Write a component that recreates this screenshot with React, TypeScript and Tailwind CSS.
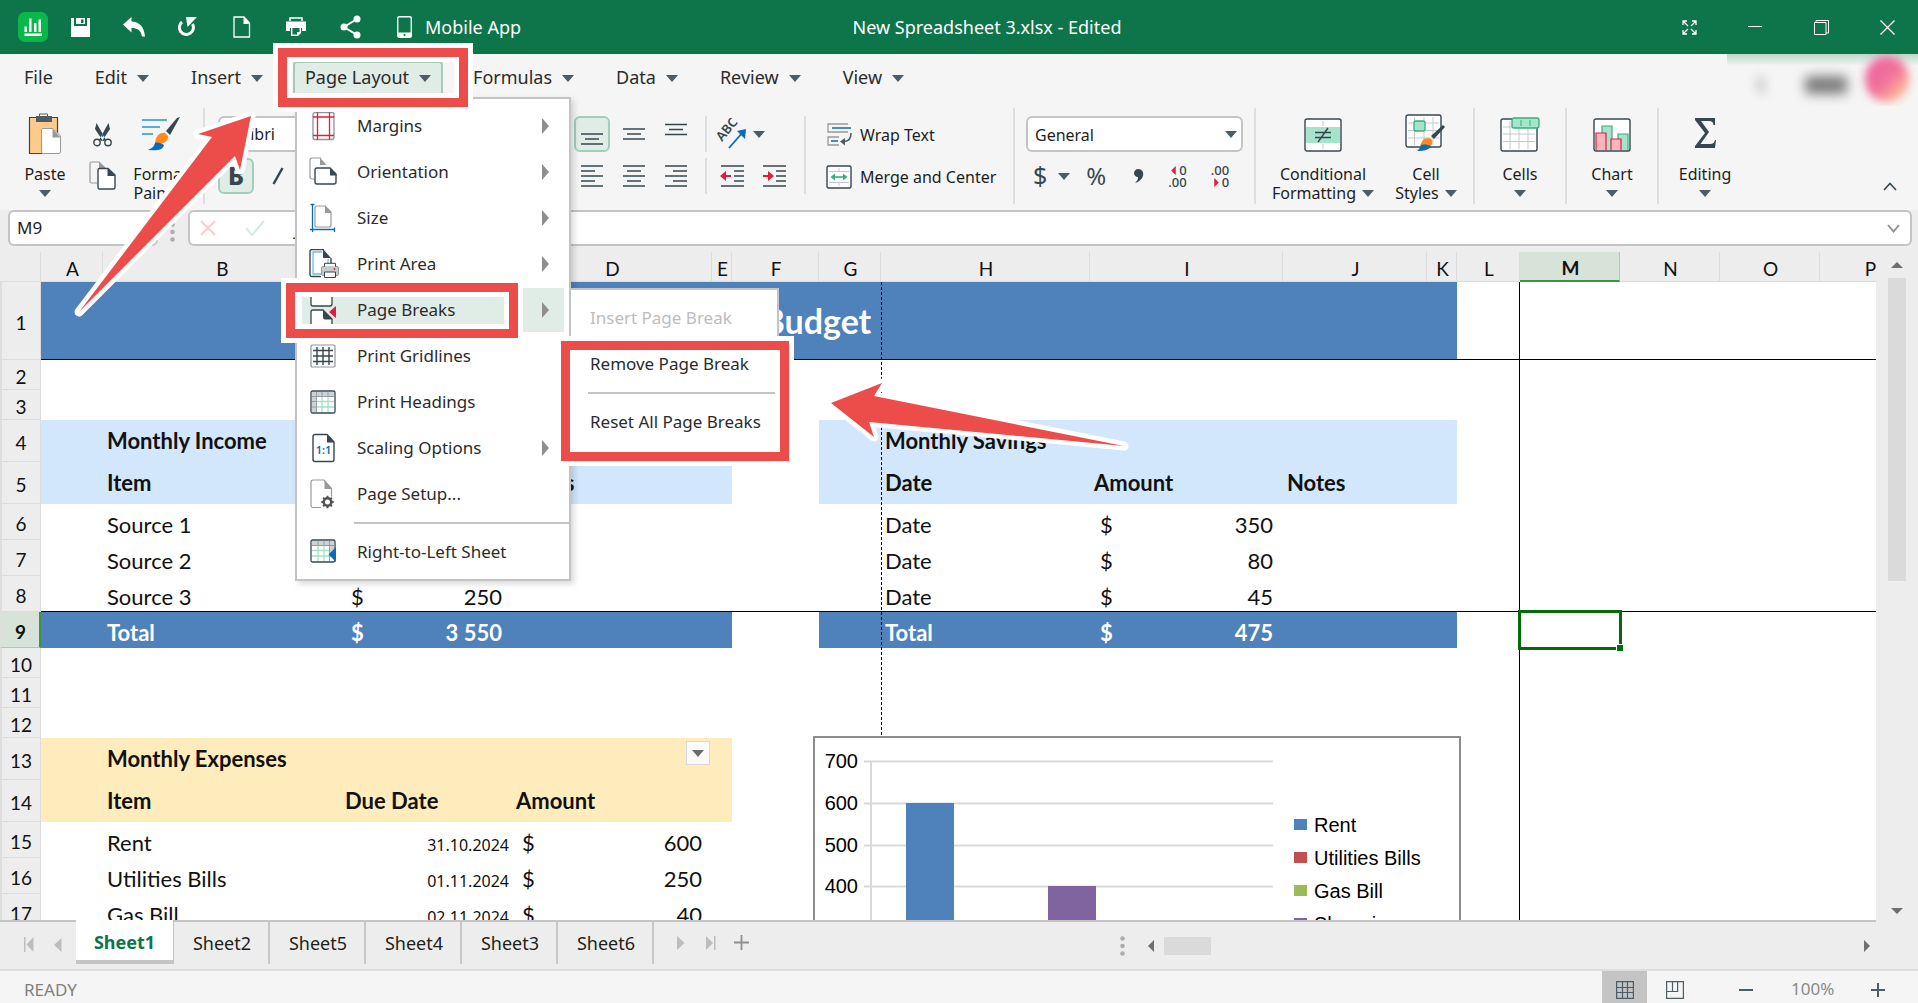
import React from "react";

const DARK = "#36474f";

type P = { children?: React.ReactNode };

function Down({ className = "text-[#4c5d68]" }: { className?: string }) {
  return (
    <svg width="12" height="7" viewBox="0 0 12 7" className={className} fill="currentColor" aria-hidden="true">
      <path d="M0 0h12L6 7z" />
    </svg>
  );
}

function Tri({ dir, className = "" }: { dir: "left" | "right" | "up" | "down"; className?: string }) {
  const d = {
    left: "M6 0v12L0 6z",
    right: "M0 0v12l6-6z",
    up: "M6 0l6 6H0z",
    down: "M0 0h12L6 6z",
  }[dir];
  const horizontal = dir === "left" || dir === "right";
  const w = horizontal ? 6 : 12;
  const h = horizontal ? 12 : 6;
  return (
    <svg width={w} height={h} viewBox={`0 0 ${w} ${h}`} className={className} fill="currentColor" aria-hidden="true">
      <path d={d} />
    </svg>
  );
}

/* ---------- title bar ---------- */

function TitleButton({ label, className, children }: P & { label: string; className: string }) {
  return (
    <button aria-label={label} className={"flex h-8 items-center justify-center " + className}>
      {children}
    </button>
  );
}

function TitleBar() {
  return (
    <header className="relative flex h-[54px] shrink-0 items-center bg-[#0d7549] pl-[18px] text-[18px] text-white">
      <svg width="30" height="30" viewBox="0 0 30 30" className="mr-[13px] shrink-0" aria-hidden="true">
        <rect width="30" height="30" rx="7" fill="#08b84a" />
        <path d="M6.5 14.500h2.500V20H6.500zM11 6.500h2.500V20H11zM16 11h2.500v9H16zM20.500 7.500H23V20h-2.500zM6.500 21.500H24V24H6.500z" fill="#fff" />
      </svg>
      <TitleButton label="Save" className="w-[38px]">
        <svg width="19" height="19" viewBox="0 0 19 19" aria-hidden="true">
          <path d="M0 0h3v8h13V0h3v19H0z" fill="#fff" />
          <path d="M5 0h9v6H5z" fill="#fff" />
          <path d="M10 1.500h2.500v3.500H10z" fill="#0d7549" />
        </svg>
      </TitleButton>
      <TitleButton label="Undo" className="ml-4 w-[38px]">
        <svg width="22" height="20" viewBox="0 0 22 20" fill="#fff" aria-hidden="true">
          <path d="M0 7.500L8.500 0v4.500C16 5 21 9 22 19.500h-3C18 13 14 11 8.500 11v4.500z" />
        </svg>
      </TitleButton>
      <TitleButton label="Redo" className="ml-4 w-[38px]">
        <svg width="20" height="20" viewBox="0 0 20 20" aria-hidden="true">
          <path d="M4 5a7 7 0 1 0 10.500 2" fill="none" stroke="#fff" strokeWidth="3" />
          <path d="M8 0H19L9.500 10z" fill="#fff" />
        </svg>
      </TitleButton>
      <TitleButton label="New" className="ml-4 w-[38px]">
        <svg width="18" height="22" viewBox="0 0 18 22" aria-hidden="true">
          <path d="M1 1h10l5.500 6v14H1z" fill="none" stroke="#fff" strokeWidth="1.300" />
          <path d="M10.500 0.500V8h6.500z" fill="#fff" />
        </svg>
      </TitleButton>
      <TitleButton label="Print" className="ml-4 w-[38px]">
        <svg width="20" height="20" viewBox="0 0 20 20" aria-hidden="true">
          <path d="M4 4V1h12v3" fill="none" stroke="#fff" strokeWidth="1.500" />
          <path d="M0 4.500h20V14h-4v-3H4v3H0z" fill="#fff" />
          <path d="M5.700 11v7.300h6l2.600-2.600V11" fill="none" stroke="#fff" strokeWidth="1.500" />
          <path d="M15 15h-4v4z" fill="#fff" />
        </svg>
      </TitleButton>
      <TitleButton label="Share" className="ml-4 w-[38px]">
        <svg width="21" height="24" viewBox="0 0 21 24" fill="#fff" aria-hidden="true">
          <path d="M17 4L4 12l13 8" fill="none" stroke="#fff" strokeWidth="2" />
          <circle cx="17" cy="4" r="3.500" />
          <circle cx="4" cy="12" r="3.500" />
          <circle cx="17" cy="20" r="3.500" />
        </svg>
      </TitleButton>
      <button className="ml-[28px] flex items-center gap-[13px]">
        <svg width="15" height="22" viewBox="0 0 15 22" aria-hidden="true">
          <rect x="0.700" y="0.700" width="13.600" height="20.600" rx="1.500" fill="none" stroke="#fff" strokeWidth="1.400" />
          <path d="M1 16.500h13V21H1z" fill="#fff" />
          <circle cx="7.500" cy="19" r="1.100" fill="#0d7549" />
        </svg>
        <span className="pt-px">Mobile App</span>
      </button>
      <h1 className="pointer-events-none absolute inset-0 flex items-center justify-center pt-px pl-[56px]">
        New Spreadsheet 3.xlsx - Edited
      </h1>
      <div className="ml-auto flex items-center pr-[14px]">
        <TitleButton label="Full screen" className="w-[66px]">
          <svg width="15" height="15" viewBox="0 0 15 15" fill="none" stroke="#fff" strokeWidth="1.300" aria-hidden="true">
            <path d="M1 5V1h4M10 1h4v4M14 10v4h-4M5 14H1v-4M1.500 1.500L6 6M13.500 1.500L9 6M13.500 13.500L9 9M1.500 13.500L6 9" />
          </svg>
        </TitleButton>
        <TitleButton label="Minimize" className="w-[66px]">
          <svg width="14" height="14" stroke="#fff" aria-hidden="true"><path d="M0 6.500h14" /></svg>
        </TitleButton>
        <TitleButton label="Restore" className="w-[66px]">
          <svg width="15" height="15" viewBox="0 0 15 15" fill="none" stroke="#fff" aria-hidden="true">
            <path d="M0.500 2.500h11.500v12H0.500zM2 2.500v-2h12.500V13H12" />
          </svg>
        </TitleButton>
        <TitleButton label="Close" className="w-[50px] pl-[16px]">
          <svg width="15" height="15" viewBox="0 0 15 15" stroke="#fff" strokeWidth="1.300" aria-hidden="true">
            <path d="M0.500 0.500l14 14M14.500 0.500l-14 14" />
          </svg>
        </TitleButton>
      </div>
    </header>
  );
}

/* ---------- menus ---------- */

const iconProps = { width: 30, height: 30, viewBox: "0 0 30 30", fill: "none", "aria-hidden": true } as const;

const menuIcons: Record<string, React.ReactNode> = {
  Margins: (
    <svg {...iconProps}>
      <rect x="4" y="1.500" width="21" height="27" rx="2" stroke="#8f9395" strokeWidth="1.300" />
      <path d="M8.500 1.500v27M20.500 1.500v27M4 6h21M4 24.500h21" stroke="#e31b3e" strokeWidth="1.300" />
    </svg>
  ),
  Orientation: (
    <svg {...iconProps}>
      <path d="M5 22H3a2 2 0 0 1-2-2V3a2 2 0 0 1 2-2h9" stroke="#999" strokeWidth="1.200" />
      <path d="M11 0.500l6.500 7.500H11z" fill="#999" />
      <path d="M21 11H8a2 2 0 0 0-2 2v12a2 2 0 0 0 2 2h17a2 2 0 0 0 2-2v-8z" fill="#fff" stroke={DARK} strokeWidth="1.400" />
      <path d="M21 10.500l7 8h-7z" fill={DARK} />
    </svg>
  ),
  Size: (
    <svg {...iconProps}>
      <path d="M16 3H8a2 2 0 0 0-2 2v17a2 2 0 0 0 2 2h12a2 2 0 0 0 2-2V9z" stroke="#999" strokeWidth="1.200" />
      <path d="M16 2.500l6.500 7.500H16z" fill="#999" />
      <path d="M3.500 1v28M1.500 1.500h4M1 26.500h24.500M25.500 24.500v4.500" stroke="#0a6cb4" strokeWidth="1.300" />
    </svg>
  ),
  "Print Area": (
    <svg {...iconProps}>
      <path d="M12 27.500H3a2 2 0 0 1-2-2V2.500a2 2 0 0 1 2-2h12" stroke={DARK} strokeWidth="1.400" />
      <path d="M13 3H4v22h8M19 10v5" stroke="#6fbfd8" strokeWidth="1.300" />
      <path d="M14 0l8 9h-8z" fill={DARK} />
      <path d="M22 9v6" stroke={DARK} strokeWidth="1.400" />
      <rect x="12.500" y="17.500" width="17" height="9" rx="1.500" fill="#c9ccce" stroke="#999" />
      <path d="M15.500 17.500v-3.200h11v3.200M15.500 23h11v5.500h-11z" fill="#fff" stroke={DARK} />
      <circle cx="25.500" cy="20" r="0.900" fill="#e31b3e" />
    </svg>
  ),
  "Page Breaks": (
    <svg {...iconProps}>
      <path d="M2 0v9a2 2 0 0 0 2 2h17a2 2 0 0 0 2-2V0z" fill="#fff" stroke={DARK} strokeWidth="1.300" />
      <path d="M2 30V17a2 2 0 0 1 2-2h10l9 9v6z" fill="#fff" stroke={DARK} strokeWidth="1.300" />
      <path d="M14 15l9.500 9.500H16a2 2 0 0 1-2-2z" fill={DARK} />
      <path d="M27 11v12l-7-6z" fill="#e31b3e" />
    </svg>
  ),
  "Print Gridlines": (
    <svg {...iconProps}>
      <rect x="2" y="4" width="24" height="22" rx="1.500" stroke="#8f9395" strokeWidth="1.200" />
      <path d="M8 6v18M14 6v18M20 6v18M4 9.500h20M4 15h20M4 20.500h20" stroke={DARK} strokeWidth="1.400" />
    </svg>
  ),
  "Print Headings": (
    <svg {...iconProps}>
      <rect x="2" y="4" width="24" height="22" rx="1.500" fill="#fff" stroke={DARK} strokeWidth="1.300" />
      <path d="M3 5h22v4.500H7V25H3z" fill="#cfd2d4" />
      <path d="M3 9.500h22M7.500 5v20" stroke="#9a9da0" />
      <path d="M13 5v4M19 5v4M3 14.500h4M3 20h4" stroke="#9a9da0" />
      <path d="M13 10v15M19 10v15M8 14.500h17M8 20h17" stroke="#a5e0c8" strokeWidth="1.300" />
    </svg>
  ),
  "Scaling Options": (
    <svg {...iconProps}>
      <path d="M18 1.500H6a2 2 0 0 0-2 2v23a2 2 0 0 0 2 2h17a2 2 0 0 0 2-2V9z" fill="#fff" stroke={DARK} strokeWidth="1.400" />
      <path d="M18 1l7.500 8.500H18z" fill={DARK} />
      <text x="14.500" y="21" textAnchor="middle" fontSize="11" fontWeight="600" fill="#0a6cb4">1:1</text>
    </svg>
  ),
  "Page Setup...": (
    <svg {...iconProps}>
      <path d="M12 28.500H4a2 2 0 0 1-2-2V3a2 2 0 0 1 2-2h11l7.500 8.500v8" stroke="#999" strokeWidth="1.200" />
      <path d="M15.500 1l7.500 9h-7.500z" fill="#999" />
      <circle cx="18.500" cy="23" r="3.800" stroke="#555" strokeWidth="2.600" />
      <path d="M18.500 16.800v2.400M18.500 26.800v2.400M12.300 23h2.400M22.300 23h2.400M14.100 18.600l1.700 1.700M21.200 25.700l1.700 1.700M14.100 27.400l1.700-1.700M21.200 20.300l1.700-1.700" stroke="#555" strokeWidth="2" />
    </svg>
  ),
  "Right-to-Left Sheet": (
    <svg {...iconProps}>
      <rect x="2" y="3" width="24" height="22" rx="1.500" fill="#fff" stroke={DARK} strokeWidth="1.300" />
      <path d="M3 4h22v16h-4V8.500H3z" fill="#cfd2d4" />
      <path d="M3 8.500h22M9 4v4M15 4v4M20.500 4v20" stroke="#9a9da0" />
      <path d="M9 9v15M15 9v15M3 13.500h17M3 19h17" stroke="#a5e0c8" strokeWidth="1.300" />
      <path d="M27 10v15l-7.500-7.500z" fill="#0a6cb4" />
    </svg>
  ),
};

const menuItems: { label: string; sub?: boolean; active?: boolean }[] = [
  { label: "Margins", sub: true },
  { label: "Orientation", sub: true },
  { label: "Size", sub: true },
  { label: "Print Area", sub: true },
  { label: "Page Breaks", sub: true, active: true },
  { label: "Print Gridlines" },
  { label: "Print Headings" },
  { label: "Scaling Options", sub: true },
  { label: "Page Setup..." },
];

function MenuItem({ label, sub, active }: { label: string; sub?: boolean; active?: boolean }) {
  return (
    <div className="px-[5px] py-px">
      <button
        role="menuitem"
        className={
          "flex h-[44px] w-full items-center pr-[14px] pl-[7px] text-left text-[17px] text-[#2b2b2b] " +
          (active ? "bg-[#e0ede6]" : "")
        }
      >
        {menuIcons[label]}
        <span className="ml-[18px] flex-1">{label}</span>
        {sub && (
          <svg width="8" height="16" className="text-[#8f8f8f]" fill="currentColor" aria-hidden="true">
            <path d="M0 0v16l7-8z" />
          </svg>
        )}
      </button>
    </div>
  );
}

function PageLayoutMenu() {
  return (
    <div role="menu" className="absolute top-[36px] left-[2px] z-20 w-[276px] border-2 border-[#c4c4c4] bg-white py-[4px] shadow-[3px_3px_6px_rgba(0,0,0,0.15)]">
      {menuItems.map((m) => (
        <MenuItem key={m.label} {...m} />
      ))}
      <div className="my-[5px] ml-[57px] h-[2px] bg-[#c4c4c4]" />
      <MenuItem label="Right-to-Left Sheet" />
      <div role="menu" className="absolute top-[189px] left-[272px] w-[210px] border-2 border-[#c4c4c4] bg-white py-[5px] text-[17px] text-[#2b2b2b]">
        <button role="menuitem" disabled className="flex h-[46px] w-full items-center pl-[19px] text-[#bdbdbd]">Insert Page Break</button>
        <button role="menuitem" className="flex h-[46px] w-full items-center pl-[19px]">Remove Page Break</button>
        <div className="my-[5px] ml-[17px] h-[2px] bg-[#c4c4c4]" />
        <button role="menuitem" className="flex h-[46px] w-full items-center pl-[19px]">Reset All Page Breaks</button>
      </div>
    </div>
  );
}

function MenuBar() {
  const tabs = ["File", "Edit", "Insert", "Page Layout", "Formulas", "Data", "Review", "View"];
  return (
    <nav className="relative flex h-[54px] shrink-0 gap-[18px] bg-[#f5f5f5] pt-[7px] pl-[12px] text-[18px] text-[#2b2b2b]">
      {tabs.map((t) => {
        const open = t === "Page Layout";
        return (
          <div key={t} className="relative">
            <button
              className={
                "flex h-[36px] items-center gap-[10px] rounded-t border-2 border-b-0 px-[10px] pb-[6px] leading-7 " +
                (open ? "border-[#a4cdb9] bg-[#e0ede6]" : "border-transparent")
              }
            >
              {t}
              {t !== "File" && <Down className="mt-[2px] text-[#4c5d68]" />}
            </button>
            {open && <PageLayoutMenu />}
          </div>
        );
      })}
      <div className="absolute top-0 right-0 h-[52px] w-[191px] overflow-hidden">
        <div className="h-3 bg-linear-to-b from-[#bcd9cb] to-[#f5f5f5]" />
        <div className="absolute top-[22px] left-[29px] h-[18px] w-[10px] rounded bg-[#d4d4d4] blur-[5px]" />
        <div className="absolute top-[22px] left-[78px] h-[18px] w-[42px] rounded bg-[#7c7c7c] blur-[6px]" />
        <div className="absolute top-[2px] left-[138px] h-[46px] w-[44px] rounded-full bg-linear-to-br from-[#f0639c] via-[#f0709c] to-[#ffd98a] blur-[4px]" />
      </div>
    </nav>
  );
}

/* ---------- ribbon ---------- */

function Divider({ className = "h-[96px]" }: { className?: string }) {
  return <div className={"w-[2px] shrink-0 bg-[#dedede] " + className} />;
}

function Lines({ d }: { d: string }) {
  return (
    <svg width="22" height="22" viewBox="0 0 22 22" stroke={DARK} strokeWidth="1.400" fill="none" aria-hidden="true">
      <path d={d} />
    </svg>
  );
}

function Tool({ label, on, children }: P & { label: string; on?: boolean }) {
  return (
    <button
      aria-label={label}
      className={
        "flex h-9 w-9 shrink-0 items-center justify-center rounded-md border-2 " +
        (on ? "border-[#a4cdb9] bg-[#e0ede6]" : "border-transparent")
      }
    >
      {children}
    </button>
  );
}

function BigButton({ lines, icon, className, inline }: { lines: string[]; icon: React.ReactNode; className: string; inline?: boolean }) {
  return (
    <button className={"flex shrink-0 flex-col items-center text-[16px] leading-[19px] text-[#1e1e1e] " + className}>
      <span className="flex h-[49px] items-end justify-center pb-[5px]">{icon}</span>
      <span className="mt-2">{lines[0]}</span>
      {inline ? (
        <span className="flex items-center gap-[6px]">
          {lines[1]}
          <Down />
        </span>
      ) : (
        <span className="flex h-[19px] items-center">{lines[1] ?? <Down />}</span>
      )}
    </button>
  );
}

const brush = (
  <>
    <path d="M0 0l-11 13 4 4L3-1z" fill={DARK} transform="translate(36 2)" />
    <path d="M24 17c-5-1-10 3-10 12 9-1 14-4 13-9z" fill="#ff8a1f" />
    <path d="M14 27c-1 4-3 5-7 7 9 1 15 0 16-5-3-2-6-3-9-2z" fill="#0a6cb4" />
  </>
);

function Ribbon() {
  return (
    <section className="flex h-[102px] shrink-0 bg-[#f5f5f5] text-[16px] text-[#1e1e1e]">
      <BigButton
        lines={["Paste"]}
        className="ml-3 w-[66px]"
        icon={
          <svg width="34" height="42" viewBox="0 0 34 42" className="-mb-[3px]" aria-hidden="true">
            <path d="M1.500 4.500h28v36h-28z" fill="#ffcb8c" stroke={DARK} strokeWidth="1.200" />
            <path d="M8 3h4V1h8v2h4v6H8z" fill="#4c5d68" />
            <path d="M11.500 3.500V1h8v2.500z" fill="#fff" stroke="#4c5d68" />
            <path d="M25 15.500H15a1.500 1.500 0 0 0-1.500 1.500v22a1.500 1.500 0 0 0 1.500 1.500h16a1.500 1.500 0 0 0 1.500-1.500V23z" fill="#fff" stroke="#999" />
            <path d="M24.500 15.500l8 9h-8z" fill="#999" />
          </svg>
        }
      />
      <div className="ml-1 flex w-[40px] flex-col items-center">
        <button aria-label="Cut" className="mt-[15px]">
          <svg width="19" height="24" viewBox="0 0 19 24" aria-hidden="true">
            <path d="M3.500 0L13 17l-3 1L2 6zM15.500 0L6 17l3 1 8-12z" fill={DARK} />
            <circle cx="4" cy="19.500" r="3.200" fill="none" stroke={DARK} strokeWidth="1.400" />
            <circle cx="15" cy="19.500" r="3.200" fill="none" stroke={DARK} strokeWidth="1.400" />
            <circle cx="9.500" cy="12.500" r="1.200" fill="#0a6cb4" />
          </svg>
        </button>
        <button aria-label="Copy" className="mt-[14px]">
          <svg width="27" height="29" viewBox="0 0 27 29" fill="none" aria-hidden="true">
            <path d="M8 22H2.500A1.500 1.500 0 0 1 1 20.500V2.500A1.500 1.500 0 0 1 2.500 1H10l6 6" stroke="#999" strokeWidth="1.200" />
            <path d="M10 1l6.500 6H10z" fill="#999" />
            <path d="M19 7.500h-8.500A1.500 1.500 0 0 0 9 9v17.500a1.500 1.500 0 0 0 1.500 1.500h14a1.500 1.500 0 0 0 1.500-1.500V14z" fill="#fff" stroke={DARK} strokeWidth="1.400" />
            <path d="M18.500 7l8 8h-8z" fill={DARK} />
          </svg>
        </button>
      </div>
      <BigButton
        lines={["Format", "Painter"]}
        className="w-[77px]"
        icon={
          <svg width="40" height="36" viewBox="0 0 40 36" aria-hidden="true">
            <path d="M1 4h25M1 11h18M1 18h11" stroke="#1e96cf" strokeWidth="1.500" />
            {brush}
          </svg>
        }
      />
      <div className="w-[4px]" />
      <Divider />

      <div className="ml-[13px] flex w-[356px] shrink-0 flex-col gap-[6px] pt-2">
        <select aria-label="Font" defaultValue="Calibri" className="h-9 w-[250px] appearance-none rounded-md border-2 border-[#c4c4c4] bg-white px-[7px]">
          <option>Calibri</option>
        </select>
        <div className="flex gap-[6px]">
          <Tool label="Bold" on>
            <span className="text-[24px] font-extrabold text-[#36474f]">B</span>
          </Tool>
          <Tool label="Italic">
            <svg width="12" height="18" aria-hidden="true"><path d="M10.500 1L1.500 17" stroke={DARK} strokeWidth="2.500" /></svg>
          </Tool>
        </div>
      </div>

      <div className="flex w-[124px] shrink-0 flex-col gap-[6px] pt-2">
        <div className="flex gap-[6px]">
          <Tool label="Align bottom" on><Lines d="M0 11h22M4 16h14M0 21h22" /></Tool>
          <Tool label="Align middle"><Lines d="M0 6h22M4 11h14M0 16h22" /></Tool>
          <Tool label="Align top"><Lines d="M0 1.500h22M4 6.500h14M0 11.500h22" /></Tool>
        </div>
        <div className="flex gap-[6px]">
          <Tool label="Align left"><Lines d="M0 1h22M0 6h14M0 11h22M0 16h14M0 21h22" /></Tool>
          <Tool label="Align center"><Lines d="M0 1h22M4 6h14M0 11h22M4 16h14M0 21h22" /></Tool>
          <Tool label="Align right"><Lines d="M0 1h22M8 6h14M0 11h22M8 16h14M0 21h22" /></Tool>
        </div>
      </div>
      <div className="flex shrink-0 flex-col gap-[6px] px-[7px] pt-2">
        <Divider className="h-9" />
        <Divider className="h-9" />
      </div>
      <div className="flex w-[90px] shrink-0 flex-col gap-[6px] pt-2">
        <button aria-label="Text orientation" className="flex h-9 items-center gap-[5px]">
          <svg width="34" height="32" viewBox="0 0 34 32" aria-hidden="true">
            <text x="8" y="24" transform="rotate(-50 8 24)" fontSize="13" fontWeight="600" fill={DARK}>ABC</text>
            <path d="M15 30L29 14" stroke="#0a6cb4" strokeWidth="1.800" />
            <path d="M32 11l-9 2 8 8z" fill="#0a6cb4" />
          </svg>
          <Down />
        </button>
        <div className="flex gap-[6px]">
          {[false, true].map((inc) => (
            <Tool key={String(inc)} label={inc ? "Increase indent" : "Decrease indent"}>
              <svg width="24" height="22" viewBox="0 0 24 22" aria-hidden="true">
                <path d="M1 1h23M14 6h10M14 11h10M14 16h10M1 21h23" stroke={DARK} strokeWidth="1.400" />
                <path d={inc ? "M12 11L6 6v4H1v2h5v4z" : "M0 11l6-5v4h5v2H6v4z"} fill="#e31b3e" />
              </svg>
            </Tool>
          ))}
        </div>
      </div>
      <Divider className="mt-2 h-[78px]" />
      <div className="ml-[14px] flex w-[193px] shrink-0 flex-col gap-[6px] pt-2">
        <button className="flex h-9 items-center gap-[8px] pl-[6px] pt-px">
          <svg width="26" height="24" viewBox="0 0 26 24" fill="none" aria-hidden="true">
            <path d="M22 1H2v8h20M13 14H2v8h11" stroke="#999" strokeWidth="1.300" />
            <path d="M6 5h19M5 18h7" stroke="#0a6cb4" strokeWidth="1.600" />
            <path d="M25 10c0 6-2 8-6 8.500" stroke="#4c5d68" strokeWidth="1.500" />
            <path d="M14 18.500l5-3.500v7.500z" fill="#4c5d68" />
          </svg>
          Wrap Text
        </button>
        <button className="flex h-9 items-center gap-[8px] pl-[6px] pt-px">
          <svg width="26" height="24" viewBox="0 0 26 24" fill="none" aria-hidden="true">
            <rect x="1" y="1" width="24" height="22" rx="1.500" fill="#fff" stroke={DARK} strokeWidth="1.400" />
            <path d="M3 6.500h20M3 17.500h20M13 3v3M13 18v3" stroke="#c4c8ca" />
            <path d="M8 12h10" stroke="#35b07a" strokeWidth="1.600" />
            <path d="M4.500 12L9 8.500v7zM21.500 12L17 8.500v7z" fill="#35b07a" />
          </svg>
          Merge and Center
        </button>
      </div>
      <Divider />
      <div className="ml-[11px] flex w-[217px] shrink-0 flex-col gap-[6px] pt-2">
        <div className="relative">
          <select aria-label="Number format" defaultValue="General" className="h-9 w-full appearance-none rounded-md border-2 border-[#c4c4c4] bg-white px-[7px] pt-px">
            <option>General</option>
          </select>
          <span className="pointer-events-none absolute top-[15px] right-[6px] leading-none"><Down /></span>
        </div>
        <div className="flex h-9 items-center text-[#36474f]">
          <button className="flex items-center gap-[11px] pl-[7px] text-[25px]">$<Down /></button>
          <button className="ml-[16px] text-[24px]">%</button>
          <button aria-label="Comma style" className="ml-[27px]">
            <svg width="11" height="14" viewBox="0 0 11 14" fill={DARK} aria-hidden="true">
              <path d="M5 0c4 0 6 3 5 7-1 3-4 6-8 7 2-2 3.500-4 3-6C2.500 8 1 6 1 4s2-4 4-4z" />
            </svg>
          </button>
          {[true, false].map((inc) => (
            <button
              key={String(inc)}
              aria-label={inc ? "Increase decimals" : "Decrease decimals"}
              className="ml-[24px] flex flex-col items-end text-[13px] leading-[12px] font-medium"
            >
              <span className="flex items-center gap-[3px]">
                {inc && <Tri dir="left" className="h-[9px] w-[5px] text-[#e31b3e]" />}
                {inc ? "0" : ".00"}
              </span>
              <span className="flex items-center gap-[3px]">
                {!inc && <Tri dir="right" className="h-[9px] w-[5px] text-[#e31b3e]" />}
                {inc ? ".00" : "0"}
              </span>
            </button>
          ))}
        </div>
      </div>
      <div className="w-[11px]" />
      <Divider />
      <BigButton
        inline
        lines={["Conditional", "Formatting"]}
        className="ml-[14px] w-[106px]"
        icon={
          <svg width="38" height="34" viewBox="0 0 38 34" fill="none" aria-hidden="true">
            <rect x="1" y="1" width="36" height="32" rx="2" fill="#fff" stroke={DARK} strokeWidth="1.400" />
            <path d="M2 9h34v16H2z" fill="#a6e3cc" />
            <path d="M19 3v5M19 26v5" stroke="#c4c8ca" />
            <path d="M11 14.500h16M11 19.500h16M14 24l10-14" stroke={DARK} strokeWidth="1.400" />
          </svg>
        }
      />
      <BigButton
        inline
        lines={["Cell", "Styles"]}
        className="ml-[10px] w-[80px]"
        icon={
          <svg width="42" height="38" viewBox="0 0 42 38" fill="none" aria-hidden="true">
            <rect x="1" y="1" width="35" height="32" rx="2" fill="#fff" stroke={DARK} strokeWidth="1.400" />
            <path d="M3 9h31M3 16.500h31M3 24h31M9.500 3v28M19 3v28M28 3v28" stroke="#c4c8ca" />
            <rect x="9" y="7" width="11" height="10" rx="2" fill="#a6e3cc" stroke="#35b07a" strokeWidth="1.300" />
            <path d="M38 11L26 22l3 3 11-12z" fill={DARK} />
            <path d="M23 24c-5 0-7 4-8 9h8c4-1 5-4 4-7-1-1-2-2-4-2z" fill="#ff8a1f" />
            <path d="M16 31c-1 3-2 4-4 6 7 0 12-1 14-5-3-1-6-2-10-1z" fill="#0a6cb4" />
          </svg>
        }
      />
      <div className="w-[7px]" />
      <Divider />
      <BigButton
        lines={["Cells"]}
        className="w-[90px]"
        icon={
          <svg width="40" height="35" viewBox="0 0 40 35" fill="none" aria-hidden="true">
            <rect x="1" y="2" width="36" height="32" rx="2" fill="#fff" stroke={DARK} strokeWidth="1.400" />
            <path d="M3 10h32M3 17h32M3 24.500h32M10 4v28M19 4v28M28 4v28" stroke="#c4c8ca" />
            <rect x="12" y="1" width="27" height="10" rx="2" fill="#a6e3cc" stroke="#35b07a" strokeWidth="1.300" />
            <path d="M21 3v6M30 3v6" stroke="#35b07a" />
          </svg>
        }
      />
      <Divider />
      <BigButton
        lines={["Chart"]}
        className="w-[90px]"
        icon={
          <svg width="38" height="34" viewBox="0 0 38 34" aria-hidden="true">
            <rect x="1" y="1" width="36" height="32" rx="2" fill="#fff" stroke={DARK} strokeWidth="1.400" />
            <path d="M9 32V8h10v24M25 32V16h10v16" fill="#a6e3cc" stroke="#35b07a" strokeWidth="1.200" />
            <path d="M3 32V15h10v17M18 32V21h10v11" fill="#ffb3bf" stroke="#e31b3e" strokeWidth="1.200" />
          </svg>
        }
      />
      <Divider />
      <BigButton
        lines={["Editing"]}
        className="w-[92px]"
        icon={
          <svg width="22" height="36" viewBox="0 0 22 36" aria-hidden="true">
            <path d="M1 2h20v7h-1.500C19 6 18 5 15 5H7l8 11-8.500 12H16c3 0 4-1 5-4h1l-1 8H1v-2l10-13L1 4z" fill={DARK} />
          </svg>
        }
      />
      <button aria-label="Collapse ribbon" className="mt-auto mr-[21px] mb-[19px] ml-auto">
        <svg width="14" height="9" fill="none" stroke="#36474f" strokeWidth="1.600" aria-hidden="true"><path d="M1 8l6-6.500L13 8" /></svg>
      </button>
    </section>
  );
}

/* ---------- formula bar ---------- */

function Dots({ className = "" }: { className?: string }) {
  return (
    <svg width="5" height="20" className={"shrink-0 " + className} fill="#adadad" aria-hidden="true">
      <circle cx="2.500" cy="2.500" r="2.300" />
      <circle cx="2.500" cy="10" r="2.300" />
      <circle cx="2.500" cy="17.500" r="2.300" />
    </svg>
  );
}

function FormulaBar() {
  return (
    <div className="flex h-[42px] shrink-0 items-start bg-[#ededed] pr-[6px] pl-[8px]">
      <div className="flex h-9 w-[150px] shrink-0 items-center rounded-md border-2 border-[#c4c4c4] bg-white">
        <input aria-label="Name box" defaultValue="M9" className="w-full bg-transparent px-[7px] text-[17px] text-[#1e1e1e] outline-none" />
      </div>
      <Dots className="mt-[12px] mr-[13px] ml-[12px]" />
      <div className="flex h-9 flex-1 items-center rounded-md border-2 border-[#c4c4c4] bg-white pl-[10px]">
        <button aria-label="Cancel">
          <svg width="16" height="16" stroke="#fbc9d0" strokeWidth="2" aria-hidden="true"><path d="M1 1l14 14M15 1L1 15" /></svg>
        </button>
        <button aria-label="Enter" className="ml-[29px]">
          <svg width="20" height="16" fill="none" stroke="#d3ebdf" strokeWidth="2" aria-hidden="true"><path d="M1 8l6 7L19 1" /></svg>
        </button>
        <button className="ml-[30px] text-[18px] italic text-[#36474f]">fx</button>
        <input aria-label="Formula" className="min-w-0 flex-1 bg-transparent px-2 outline-none" />
        <button aria-label="Expand formula bar" className="mr-[10px]">
          <svg width="13" height="9" fill="none" stroke="#8f8f8f" strokeWidth="1.800" aria-hidden="true"><path d="M1 1l5.500 6.500L12 1" /></svg>
        </button>
      </div>
    </div>
  );
}

/* ---------- sheet ---------- */

const cols = ["A", "B", "C", "D", "E", "F", "G", "H", "I", "J", "K", "L", "M", "N", "O", "P"];
const colW = ["w-[41px]", "w-[62px]", "w-[238px]", "w-[171px]", "w-[200px]", "w-[20px]", "w-[87px]", "w-[62px]", "w-[209px]", "w-[193px]", "w-[144px]", "w-[30px]", "w-[63px]", "w-[100px]", "w-[100px]", "w-[100px]", "w-[100px]"];

type Row = { n: number; h: string; left?: string; right?: string; bold?: boolean; line?: boolean; cells?: Record<string, string> };

const BLUE = "bg-[#4f81bb] text-white";
const PALE = "bg-[#d2e7fc]";
const SAND = "bg-[#ffecbc]";

const rows: Row[] = [
  { n: 2, h: "h-[30px]" },
  { n: 3, h: "h-[30px]" },
  { n: 4, h: "h-[42px]", left: PALE, right: PALE, bold: true, cells: { B: "Monthly Income", H: "Monthly Savings" } },
  { n: 5, h: "h-[42px]", left: PALE, right: PALE, bold: true, cells: { B: "Item", C: "Amount", D: "Notes", H: "Date", I: "Amount", J: "Notes" } },
  { n: 6, h: "h-[36px]", cells: { B: "Source 1", C: "$|2 500", H: "Date", I: "$|350" } },
  { n: 7, h: "h-[36px]", cells: { B: "Source 2", C: "$|800", H: "Date", I: "$|80" } },
  { n: 8, h: "h-[36px]", line: true, cells: { B: "Source 3", C: "$|250", H: "Date", I: "$|45" } },
  { n: 9, h: "h-[36px]", left: BLUE, right: BLUE, bold: true, cells: { B: "Total", C: "$|3 550", H: "Total", I: "$|475" } },
  { n: 10, h: "h-[30px]" },
  { n: 11, h: "h-[30px]" },
  { n: 12, h: "h-[30px]" },
  { n: 13, h: "h-[42px]", left: SAND, bold: true, cells: { B: "Monthly Expenses" } },
  { n: 14, h: "h-[42px]", left: SAND, bold: true, cells: { B: "Item", C: "Due Date", D: "Amount" } },
  { n: 15, h: "h-[36px]", cells: { B: "Rent", C: ">31.10.2024", D: "$|600" } },
  { n: 16, h: "h-[36px]", cells: { B: "Utilities Bills", C: ">01.11.2024", D: "$|250" } },
  { n: 17, h: "h-[36px]", cells: { B: "Gas Bill", C: ">02.11.2024", D: "$|40" } },
];

function CellContent({ v }: { v: string }) {
  if (v.startsWith(">")) {
    return <div className='pt-[3px] pr-[3px] text-right font-["Noto_Sans"] text-[16px]'>{v.slice(1)}</div>;
  }
  if (v.includes("|")) {
    const [a, b] = v.split("|");
    return (
      <div className="flex justify-between px-[10px]">
        <span>{a}</span>
        <span>{b}</span>
      </div>
    );
  }
  return <div className="pl-[4px]">{v}</div>;
}

function RowHead({ n, selected }: { n: number; selected?: boolean }) {
  return (
    <th
      scope="row"
      className={
        "border-b border-l-2 border-l-[#dedede] p-0 pt-[5px] text-[19px] " +
        (selected
          ? "border-r-2 border-r-[#3a963f] border-b-[#b5c4b6] bg-[#d7e3d8] font-bold"
          : "border-r border-r-[#dcdcdc] border-b-[#dcdcdc] bg-[#ededed] font-normal")
      }
    >
      {n}
    </th>
  );
}

function Chart() {
  const ys = [24, 66, 108, 149, 191];
  return (
    <figure className="absolute top-[484px] left-[813px] flex h-[300px] w-[648px] border-2 border-[#8c8c8c] bg-white font-['Liberation_Sans'] text-[20px] text-black" aria-label="Monthly expenses chart">
      <svg width="470" height="296" aria-hidden="true" className="shrink-0">
        {ys.map((y, i) => (
          <g key={y}>
            <path d={`M49 ${y - 0.5}H458`} stroke="#d9d9d9" strokeWidth="2" />
            <text x="43" y={y + 6} textAnchor="end" fontSize="20">{700 - i * 100}</text>
          </g>
        ))}
        <path d="M56 23v260" stroke="#d9d9d9" strokeWidth="2" />
        <rect x="91" y="65" width="48" height="200" fill="#4f81bb" />
        <rect x="233" y="148" width="48" height="120" fill="#8064a0" />
      </svg>
      <ul className="mt-[70px] ml-[9px] leading-[34px]">
        {[
          ["Rent", "bg-[#4f81bb]"],
          ["Utilities Bills", "bg-[#c0504d]"],
          ["Gas Bill", "bg-[#9bbb59]"],
          ["Shopping", "bg-[#8064a2]"],
        ].map(([t, c]) => (
          <li key={t} className="flex h-[33px] items-center gap-[7px]">
            <span className={"h-[11px] w-[13px] " + c} />
            {t}
          </li>
        ))}
      </ul>
    </figure>
  );
}

function Sheet() {
  return (
    <main className="flex min-h-0 flex-1 bg-[#ededed]">
      <div className="relative min-w-0 flex-1 overflow-hidden border-b-2 border-[#c4c4c4] bg-[#ededed]">
        <table className="w-[1920px] table-fixed border-separate border-spacing-0 font-['Lato'] text-[22px] leading-[24px] text-[#111]">
          <colgroup>
            {colW.map((w, i) => (
              <col key={i} className={w} />
            ))}
          </colgroup>
          <thead>
            <tr className="h-[30px] bg-[#ededed] text-[19px]">
              <td className="border-r border-b border-[#dcdcdc] p-0" />
              {cols.map((c) => (
                <th
                  key={c}
                  scope="col"
                  className={
                    "border-r p-0 pt-1 pl-[2px] " +
                    (c === "M"
                      ? "border-b-2 border-r-[#b5c4b6] border-b-[#3a963f] bg-[#d7e3d8] font-bold"
                      : "border-b border-[#dcdcdc] font-normal")
                  }
                >
                  {c}
                </th>
              ))}
            </tr>
          </thead>
          <tbody className="bg-white">
            <tr className="h-[78px]">
              <RowHead n={1} />
              <td colSpan={11} className="border-b border-black bg-[#4f81bb] p-0 text-center text-[34px] leading-[40px] font-bold text-white">
                Monthly Budget
              </td>
              <td className="border-r border-b border-black" />
              <td className="border-b border-black" />
              <td className="border-b border-black" />
              <td className="border-b border-black" />
              <td className="border-b border-black" />
            </tr>
            {rows.map((r) => (
              <tr key={r.n} className={r.h}>
                <RowHead n={r.n} selected={r.n === 9} />
                {cols.map((c, i) => {
                  const fill = i < 5 ? r.left : i > 5 && i < 11 ? r.right : undefined;
                  const v = r.cells?.[c];
                  return (
                    <td
                      key={c}
                      className={
                        "relative border-black p-0 whitespace-nowrap " +
                        (r.h === "h-[36px]" ? "pt-[6px] " : "") +
                        (r.bold ? "font-bold " : "") +
                        (r.line ? "border-b " : "") +
                        (c === "L" ? "border-r " : "") +
                        (fill ?? "")
                      }
                    >
                      {v && <CellContent v={v} />}
                      {r.n === 13 && c === "D" && (
                        <button aria-label="Filter" className="absolute top-[3px] right-[2px] flex h-6 w-6 items-center justify-center border border-[#d9d9d9] bg-[#fafafa]">
                          <Down className="text-[#6b6b6b]" />
                        </button>
                      )}
                      {r.n === 9 && c === "M" && (
                        <div className="absolute -inset-[2px] z-10 border-[3px] border-[#046b0a] bg-white">
                          <div className="absolute -right-[4px] -bottom-[4px] h-[7px] w-[7px] border-t border-l border-white bg-[#046b0a]" />
                        </div>
                      )}
                    </td>
                  );
                })}
              </tr>
            ))}
          </tbody>
        </table>
        <div className="absolute top-[30px] bottom-0 left-[881px] w-px bg-[repeating-linear-gradient(to_bottom,#000_0_3px,transparent_3px_5px)]" />
        <Chart />
      </div>
      <div className="flex w-[42px] shrink-0 flex-col items-center text-[#6f6f6f]">
        <button aria-label="Scroll up" className="pt-[10px] pb-[10px]"><Tri dir="up" /></button>
        <div className="min-h-0 flex-1">
          <div className="h-1/2 max-h-[303px] w-[18px] bg-[#dadada]" />
        </div>
        <button aria-label="Scroll down" className="pb-[8px]"><Tri dir="down" /></button>
      </div>
    </main>
  );
}

/* ---------- bottom bars ---------- */

function SheetTabs() {
  return (
    <div className="flex h-[49px] shrink-0 border-b-2 border-[#dedede] bg-[#ededed] text-[18px] text-[#1e1e1e]">
      <div className="flex w-[76px] shrink-0 items-center gap-[20px] pb-[2px] pl-[24px] text-[#bdbdbd]">
        <button aria-label="First sheet">
          <svg width="10" height="15" fill="currentColor" aria-hidden="true"><path d="M0 0h1.500v15H0zM9.500 0v15L2.500 7.500z" /></svg>
        </button>
        <button aria-label="Previous sheet">
          <svg width="8" height="14" fill="currentColor" aria-hidden="true"><path d="M7.500 0v14L0 7z" /></svg>
        </button>
      </div>
      <div role="tablist" className="flex">
        <button role="tab" aria-selected="true" className="relative z-10 -mt-[2px] h-[44px] w-[98px] border-r border-b-4 border-[#c4c4c4] bg-white pt-1 font-bold text-[#0d7549]">
          Sheet1
        </button>
        {["Sheet2", "Sheet5", "Sheet4", "Sheet3", "Sheet6"].map((s) => (
          <button role="tab" key={s} className="h-[42px] w-[96px] border-r-2 border-[#c9c9c9] pl-[2px]">{s}</button>
        ))}
      </div>
      <div className="flex items-center gap-[21px] pb-[6px] pl-[23px] text-[#bdbdbd]">
        <button aria-label="Next sheet">
          <svg width="8" height="14" fill="currentColor" aria-hidden="true"><path d="M0 0v14l7.500-7z" /></svg>
        </button>
        <button aria-label="Last sheet">
          <svg width="10" height="14" fill="currentColor" aria-hidden="true"><path d="M8 0h1.500v14H8zM0 0v14l7-7z" /></svg>
        </button>
        <button aria-label="Add sheet" className="-ml-[3px]">
          <svg width="15" height="15" stroke="#8f8f8f" strokeWidth="1.800" aria-hidden="true"><path d="M7.500 0v15M0 7.500h15" /></svg>
        </button>
      </div>
      <div className="ml-auto flex w-[798px] items-center text-[#6f6f6f]">
        <Dots />
        <button aria-label="Scroll left" className="ml-[23px]"><Tri dir="left" /></button>
        <div className="ml-[10px] flex-1"><div className="h-[18px] w-[47px] bg-[#dadada]" /></div>
        <button aria-label="Scroll right" className="mr-[48px]"><Tri dir="right" /></button>
      </div>
    </div>
  );
}

function StatusBar() {
  return (
    <footer className="flex h-[32px] shrink-0 items-center bg-[#f5f5f5] text-[17px] text-[#7f7f7f]">
      <span className="pt-[5px] pl-[24px]">READY</span>
      <button aria-label="Normal view" className="ml-auto flex h-full w-[45px] items-center justify-center bg-[#c4c4c4] pt-[6px]">
        <svg width="18" height="18" fill="none" stroke="#4c5d68" strokeWidth="1.200" aria-hidden="true"><path d="M0.600 0.600h16.800v16.800H0.600zM6.500 0v18M11.500 0v18M0 6.500h18M0 11.500h18" /></svg>
      </button>
      <button aria-label="Page view" className="ml-[19px] pt-[6px]">
        <svg width="18" height="18" fill="none" stroke="#4c5d68" strokeWidth="1.200" aria-hidden="true"><path d="M0.600 0.600h16.800v16.800H0.600zM0.600 10.500h11V0.600M6.500 0.600v10" /></svg>
      </button>
      <button aria-label="Zoom out" className="ml-[55px] pt-[6px]">
        <svg width="14" height="14" stroke="#4c5d68" strokeWidth="2" aria-hidden="true"><path d="M0 7h14" /></svg>
      </button>
      <span className="ml-[38px] w-[80px] pt-[3px] text-[#8a8a8a]">100%</span>
      <button aria-label="Zoom in" className="mr-[33px] pt-[6px]">
        <svg width="14" height="14" stroke="#4c5d68" strokeWidth="2" aria-hidden="true"><path d="M0 7h14M7 0v14" /></svg>
      </button>
    </footer>
  );
}

/* ---------- callouts drawn over the window ---------- */

function Frame({ className }: { className: string }) {
  return (
    <div className={"absolute border-[9px] border-[#ec4d4b] shadow-[0_0_0_5px_#fff,inset_0_0_0_5px_#fff] " + className} />
  );
}

function Callouts() {
  return (
    <div className="pointer-events-none absolute inset-0 z-30 overflow-hidden">
      <svg className="absolute inset-0 h-full w-full" aria-hidden="true">
        <g fill="#ec4d4b" stroke="#fff" strokeWidth="9" strokeLinejoin="round" paintOrder="stroke">
          <path d="M251 116L198 134l14 3L79 312 235 156l5 14z" />
          <path d="M831 403l51-20-8 13 250 50-255-24 5 15z" />
        </g>
      </svg>
      <Frame className="top-[48px] left-[278px] h-[59px] w-[190px]" />
      <Frame className="top-[283px] left-[286px] h-[55px] w-[232px]" />
      <Frame className="top-[341px] left-[561px] h-[120px] w-[228px]" />
    </div>
  );
}

export default function App() {
  return (
    <div className="relative flex h-screen flex-col overflow-hidden font-['Noto_Sans',sans-serif]">
      <TitleBar />
      <MenuBar />
      <Ribbon />
      <FormulaBar />
      <Sheet />
      <SheetTabs />
      <StatusBar />
      <Callouts />
    </div>
  );
}
